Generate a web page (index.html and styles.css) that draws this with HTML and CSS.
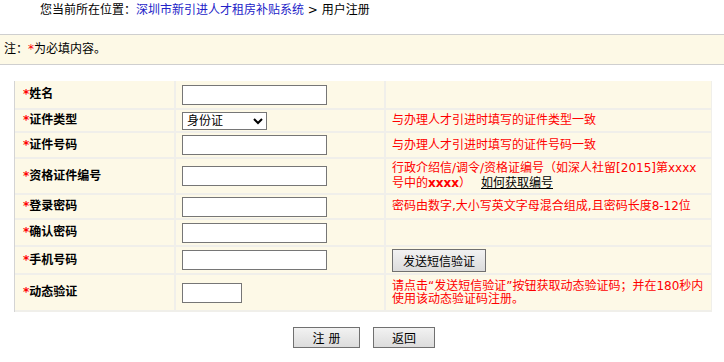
FILE: index.html
```html
<!DOCTYPE html>
<html>

<head>
  <meta charset="utf-8">
  <title>用户注册</title>
  <link rel="stylesheet" href="styles.css">
</head>

<body>
  <!-- 位置 -->
  <div class="crumb">
    您当前所在位置：<a href="#">深圳市新引进人才租房补贴系统</a>&nbsp;&gt;&nbsp;用户注册
  </div>

  <div class="notice">注：<span class="star">*</span>为必填内容。</div>

  <!-- 注册表单 -->
  <table class="regform">
    <tr class="r1">
      <td class="label"><span class="star">*</span>姓名</td>
      <td class="field"><input type="text" class="txt"></td>
      <td class="hint"></td>
    </tr>
    <tr class="r2">
      <td class="label"><span class="star">*</span>证件类型</td>
      <td class="field">
        <select class="sel">
          <option>身份证</option>
          <option>护照</option>
        </select>
      </td>
      <td class="hint">与办理人才引进时填写的证件类型一致</td>
    </tr>
    <tr class="r3">
      <td class="label"><span class="star">*</span>证件号码</td>
      <td class="field"><input type="text" class="txt"></td>
      <td class="hint">与办理人才引进时填写的证件号码一致</td>
    </tr>
    <tr class="r4">
      <td class="label"><span class="star">*</span>资格证件编号</td>
      <td class="field"><input type="text" class="txt"></td>
      <td class="hint tall">行政介绍信/调令/资格证编号（如深人社留[2015]第xxxx<br>号中的<b>xxxx</b>）<a href="#" class="howto">如何获取编号</a></td>
    </tr>
    <tr class="r5">
      <td class="label"><span class="star">*</span>登录密码</td>
      <td class="field"><input type="password" class="txt"></td>
      <td class="hint">密码由数字,大小写英文字母混合组成,且密码长度8-12位</td>
    </tr>
    <tr class="r6">
      <td class="label"><span class="star">*</span>确认密码</td>
      <td class="field"><input type="password" class="txt"></td>
      <td class="hint"></td>
    </tr>
    <tr class="r7">
      <td class="label"><span class="star">*</span>手机号码</td>
      <td class="field"><input type="text" class="txt"></td>
      <td class="hint"><button type="button" class="smsbtn">发送短信验证</button></td>
    </tr>
    <tr class="r8">
      <td class="label"><span class="star">*</span>动态验证</td>
      <td class="field"><input type="text" class="txt short"></td>
      <td class="hint">请点击“发送短信验证”按钮获取动态验证码；并在180秒内<br>使用该动态验证码注册。</td>
    </tr>
  </table>

  <div class="actions">
    <button type="button" class="btn">注&nbsp;册</button>
    <button type="button" class="btn back">返回</button>
  </div>
</body>

</html>
```

FILE: styles.css
```css
body {
  margin: 0;
  font-family: "DejaVu Sans", "Noto Sans CJK SC", sans-serif;
  font-size: 12px;
  line-height: 15px;
  color: #000;
}

.crumb {
  padding: 3px 0 0 40px;
  height: 15px;
  margin-bottom: 16px;
}

.crumb a {
  color: #2323c8;
  text-decoration: none;
}

.star {
  color: #f00;
}

.notice {
  height: 29px;
  line-height: 29px;
  padding-left: 4px;
  background: #fdf9e6;
  border-top: 1px solid #cfcfcf;
  border-bottom: 1px solid #cfcfcf;
}

/* 表格 */
.regform {
  margin: 16px 0 0 14px;
  width: 698px;
  border-collapse: separate;
  border-spacing: 0;
  border-left: 1px solid #d4d4d4;
}

.regform td {
  background: #fdf9e7;
  border-right: 2px solid #f0efea;
  border-bottom: 2px solid #f0efea;
  padding: 0;
  vertical-align: middle;
}

.regform td.label {
  width: 151px;
  padding-left: 8px;
  font-weight: bold;
}

.regform td.field {
  width: 202px;
  padding-left: 6px;
}

.regform td.hint {
  padding-left: 6px;
  border-right: 1px solid #f0efea;
  color: #f00;
}

.r1 td { height: 27px; }
.r2 td { height: 21px; }
.r3 td { height: 24px; }
.r4 td { height: 34px; }
.r5 td { height: 23px; }
.r6 td { height: 25px; }
.r7 td { height: 26px; }
.r8 td { height: 34px; }

.r8 td.hint {
  line-height: 13px;
  padding-top: 1px;
}

.txt {
  display: block;
  box-sizing: border-box;
  width: 145px;
  height: 20px;
  margin: 0;
  padding: 0 2px;
  border: 1px solid #767676;
  background: #fff;
  font: inherit;
}

.txt.short {
  width: 60px;
}

.sel {
  display: block;
  box-sizing: border-box;
  width: 85px;
  height: 18px;
  margin: 0;
  padding: 0;
  border: 1px solid #767676;
  border-radius: 0;
  background: #fff;
  font-family: inherit;
  font-size: 12px;
}

.howto {
  color: #000;
  margin-left: 10px;
}

.smsbtn {
  display: block;
  box-sizing: border-box;
  width: 94px;
  height: 23px;
  padding: 0;
  border: 1px solid #707070;
  background: linear-gradient(#f2f2f2, #dcdcdc);
  font-family: inherit;
  font-size: 12px;
  color: #000;
}

.actions {
  display: flex;
  justify-content: center;
  gap: 13px;
  margin-top: 15px;
  padding-left: 4px;
}

.btn {
  box-sizing: border-box;
  width: 67px;
  height: 21px;
  padding: 0;
  border: 1px solid #707070;
  background: linear-gradient(#f2f2f2, #dcdcdc);
  font-family: inherit;
  font-size: 12px;
  color: #000;
}

.btn.back {
  width: 62px;
}
```
